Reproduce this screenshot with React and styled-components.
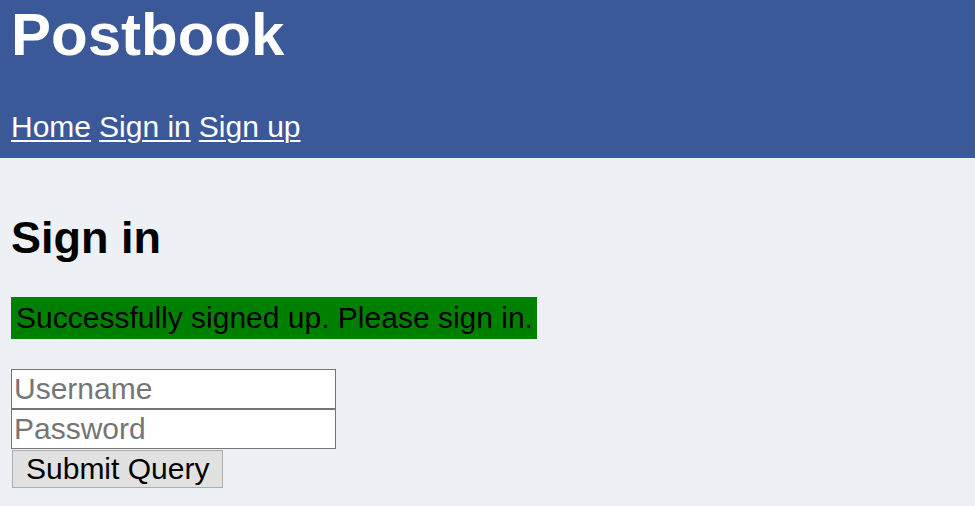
import React from "react";
import styled, { createGlobalStyle } from "styled-components";

const Global = createGlobalStyle`
  html, body { margin: 0; padding: 0; }
  body {
    background: #edf0f5;
    font-family: "Liberation Sans", Arial, sans-serif;
    font-size: 30px;
    color: #000;
  }
`;

const Header = styled.header`
  background: #3b5998;
  color: #fff;
  height: 158px;
  box-sizing: border-box;
  padding: 2px 11px 0;
  display: flex;
  flex-direction: column;
`;

const Title = styled.h1`
  margin: 0;
  font-size: 60px;
  font-weight: bold;
  line-height: 66px;
`;

const Nav = styled.nav`
  margin-top: 42px;
  display: flex;
  gap: 8px;
  line-height: 34px;
`;

const NavLink = styled.a`
  color: #fff;
  text-decoration: underline;
  text-underline-offset: 3px;
  text-decoration-thickness: 2px;
`;

const Main = styled.main`
  padding: 0 11px;
  display: flex;
  flex-direction: column;
  align-items: flex-start;
`;

const Heading = styled.h2`
  margin: 54px 0 33px;
  font-size: 45px;
  font-weight: bold;
  line-height: 52px;
`;

const Message = styled.div`
  background: #008000;
  color: #000;
  padding: 4px 4px 4px 5px;
  line-height: 34px;
`;

const Form = styled.form`
  margin-top: 30px;
  display: flex;
  flex-direction: column;
  align-items: flex-start;
`;

const Input = styled.input`
  box-sizing: border-box;
  width: 325px;
  height: 40px;
  margin: 0;
  padding: 0 2px;
  border: 1px solid #767676;
  background: #fff;
  font-family: "Liberation Sans", Arial, sans-serif;
  font-size: 30px;
  color: #000;
  outline: none;
  &::placeholder { color: #757575; }
`;

const Button = styled.button`
  box-sizing: border-box;
  margin: 1px 0 0 1px;
  height: 38px;
  padding: 0 13px;
  border: 1px solid #adadad;
  background: #e1e1e1;
  font-family: "Liberation Sans", Arial, sans-serif;
  font-size: 30px;
  line-height: 34px;
  color: #000;
`;

export default function App() {
  return (
    <>
      <Global />
      <Header>
        <Title>Postbook</Title>
        <Nav>
          <NavLink href="#">Home</NavLink>
          <NavLink href="#">Sign in</NavLink>
          <NavLink href="#">Sign up</NavLink>
        </Nav>
      </Header>
      <Main>
        <Heading>Sign in</Heading>
        <Message>Successfully signed up. Please sign in.</Message>
        <Form onSubmit={(e) => e.preventDefault()}>
          <Input type="text" placeholder="Username" />
          <Input type="password" placeholder="Password" />
          <Button type="submit">Submit Query</Button>
        </Form>
      </Main>
    </>
  );
}
